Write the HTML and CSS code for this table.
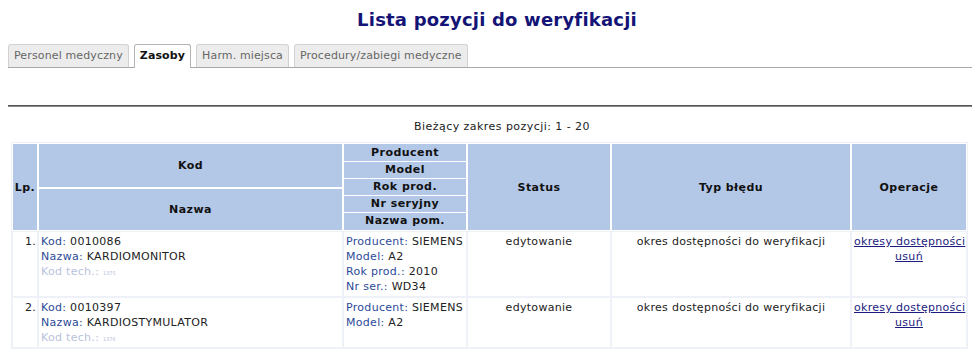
FILE: index.html
```html
<!DOCTYPE html>
<html lang="pl">
<head>
<meta charset="utf-8">
<title>Lista pozycji do weryfikacji</title>
<link rel="stylesheet" href="styles.css">
</head>
<body>
<h1 class="title">Lista pozycji do weryfikacji</h1>
<div class="tabs">
  <span class="tab">Personel medyczny</span>
  <span class="tab active">Zasoby</span>
  <span class="tab">Harm. miejsca</span>
  <span class="tab">Procedury/zabiegi medyczne</span>
</div>
<div class="rule"></div>
<p class="range">Bieżący zakres pozycji: 1 - 20</p>
<table class="grid">
  <colgroup>
    <col class="c-lp"><col class="c-kod"><col class="c-prod"><col class="c-status"><col class="c-typ"><col class="c-op">
  </colgroup>
  <thead>
    <tr>
      <th rowspan="2">Lp.</th>
      <th class="h-kod">Kod</th>
      <th rowspan="2" class="stack">
        <div>Producent</div>
        <div>Model</div>
        <div>Rok prod.</div>
        <div>Nr seryjny</div>
        <div>Nazwa pom.</div>
      </th>
      <th rowspan="2">Status</th>
      <th rowspan="2">Typ błędu</th>
      <th rowspan="2">Operacje</th>
    </tr>
    <tr>
      <th class="h-nazwa">Nazwa</th>
    </tr>
  </thead>
  <tbody>
    <tr>
      <td class="lp">1.</td>
      <td>
        <div><span class="lbl">Kod:</span> 0010086</div>
        <div><span class="lbl">Nazwa:</span> KARDIOMONITOR</div>
        <div class="tech">Kod tech.: <span class="tiny">1375</span></div>
      </td>
      <td>
        <div><span class="lbl">Producent:</span> SIEMENS</div>
        <div><span class="lbl">Model:</span> A2</div>
        <div><span class="lbl">Rok prod.:</span> 2010</div>
        <div><span class="lbl">Nr ser.:</span> WD34</div>
      </td>
      <td class="ctr">edytowanie</td>
      <td class="ctr">okres dostępności do weryfikacji</td>
      <td class="ctr ops"><a href="#">okresy dostępności</a><br><a href="#">usuń</a></td>
    </tr>
    <tr>
      <td class="lp">2.</td>
      <td>
        <div><span class="lbl">Kod:</span> 0010397</div>
        <div><span class="lbl">Nazwa:</span> KARDIOSTYMULATOR</div>
        <div class="tech">Kod tech.: <span class="tiny">1376</span></div>
      </td>
      <td>
        <div><span class="lbl">Producent:</span> SIEMENS</div>
        <div><span class="lbl">Model:</span> A2</div>
      </td>
      <td class="ctr">edytowanie</td>
      <td class="ctr">okres dostępności do weryfikacji</td>
      <td class="ctr ops"><a href="#">okresy dostępności</a><br><a href="#">usuń</a></td>
    </tr>
  </tbody>
</table>
</body>
</html>
```
FILE: styles.css
```css
html, body {
  background: #ffffff;
}
body {
  margin: 8px;
  font-family: "DejaVu Sans", Verdana, sans-serif;
  font-size: 11px;
  letter-spacing: 0.3px;
  color: #222222;
}
.title {
  margin: 2px 0 0 0;
  padding-left: 14px;
  height: 34px;
  line-height: 20px;
  font-size: 18px;
  letter-spacing: 0.2px;
  font-weight: bold;
  text-align: center;
  color: #141477;
}
.tabs {
  display: flex;
  gap: 5px;
  border-bottom: 1px solid #a8a8a8;
  height: 23px;
  align-items: flex-end;
}
.tab {
  box-sizing: border-box;
  height: 23px;
  padding: 0 5px;
  line-height: 22px;
  letter-spacing: 0.13px;
  background: #ececec;
  color: #666666;
  border: 1px solid #d2d2d2;
  border-bottom: none;
  border-radius: 3px 3px 0 0;
}
.tab.active {
  background: #ffffff;
  color: #111111;
  font-weight: bold;
  border-color: #b4b4b4;
  height: 24px;
  margin-bottom: -1px;
}
.rule {
  margin-top: 37px;
  border-top: 1px solid #555555;
  border-bottom: 1px solid #8a8a8a;
}
.range {
  margin: 13px 0 8px 0;
  padding-left: 24px;
  text-align: center;
  line-height: 14px;
  letter-spacing: 0.45px;
  color: #222222;
}
.grid {
  table-layout: fixed;
  width: 957px;
  margin: 0 0 0 3px;
  border-collapse: separate;
  border-spacing: 0;
  border: 1px solid #eef1f7;
}
.c-lp { width: 26px; }
.c-kod { width: 305px; }
.c-prod { width: 124px; }
.c-status { width: 144px; }
.c-typ { width: 240px; }
.c-op { width: 116px; }
.grid th {
  background: #b3c7e7;
  border: 1px solid #ffffff;
  color: #111111;
  font-weight: bold;
  font-size: 11px;
  letter-spacing: 0.45px;
  padding: 0;
  text-align: center;
  vertical-align: middle;
}
.grid th.h-kod { height: 43px; }
.grid th.stack { padding: 1px 0; }
.stack div {
  line-height: 16px;
  border-bottom: 1px solid #ffffff;
}
.stack div:last-child { border-bottom: none; }
.grid td {
  border: 1px solid #eef1f7;
  padding: 2px 2px 2px 2px;
  vertical-align: top;
  line-height: 15px;
  color: #222222;
}
.grid tbody tr:last-child td { padding-bottom: 0; }
.grid td.lp { text-align: right; padding-right: 1px; }
.grid td.ctr { text-align: center; }
.lbl { color: #2c4a98; }
.tech { color: #b8c2dc; }
.tiny { font-size: 5px; letter-spacing: 0; }
.ops a { color: #1b1b80; white-space: nowrap; }
```
